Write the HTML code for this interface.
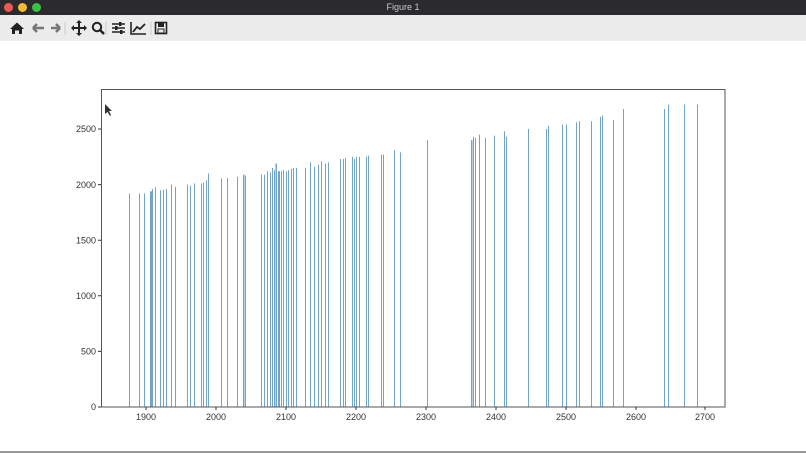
<!DOCTYPE html>
<html><head><meta charset="utf-8"><style>
html,body{margin:0;padding:0;width:806px;height:453px;overflow:hidden;background:#fff;font-family:"Liberation Sans",sans-serif}
#tb{position:absolute;left:0;top:0;width:806px;height:15px;background:#2b2b2f;color:#c8c8c8;font-size:9px;text-align:center;line-height:15px}
.d{position:absolute;top:3px;width:9px;height:9px;border-radius:50%}
#tool{position:absolute;left:0;top:15px;width:806px;height:26px;background:#ececec}
</style></head><body>
<div id="tb">Figure 1
<div class="d" style="left:4px;background:#ee5a52"></div>
<div class="d" style="left:18px;background:#f5bd2f"></div>
<div class="d" style="left:32px;background:#37c443"></div>
</div>
<div id="tool">
<svg width="180" height="26" viewBox="0 0 180 26">
<g fill="#222">
<path d="M10 14 L17 7.5 L24 14 L22 14 L22 19 L19 19 L19 15.5 L15 15.5 L15 19 L12 19 L12 14 Z"/>
<path d="M38 13 L33 13 M33 13 L37 9 M33 13 L37 17" stroke="#777" stroke-width="2.6" fill="none"/>
<path d="M38 13 L44 13" stroke="#777" stroke-width="2.6"/>
<path d="M51 13 L60 13 M60 13 L56 9 M60 13 L56 17" stroke="#777" stroke-width="2.6" fill="none"/>
<path d="M79 7 L79 19 M73 13 L85 13" stroke="#222" stroke-width="2"/>
<path d="M79 5 L76 8 L82 8Z M79 21 L76 18 L82 18Z M71 13 L74 10 L74 16Z M87 13 L84 10 L84 16Z"/>
<circle cx="97" cy="12" r="4.2" fill="none" stroke="#222" stroke-width="2"/>
<path d="M100 15 L104 19" stroke="#222" stroke-width="2.6"/>
<path d="M112 9 H125 M112 13 H125 M112 17 H125" stroke="#222" stroke-width="1.5"/>
<rect x="119" y="7" width="2.5" height="4"/><rect x="115" y="11" width="2.5" height="4"/><rect x="120" y="15" width="2.5" height="4"/>
<path d="M131 7 V19 H146" stroke="#222" stroke-width="1.6" fill="none"/>
<path d="M133 17 L137 12 L140 14 L145 9" stroke="#222" stroke-width="1.8" fill="none"/>
<rect x="155.5" y="7.5" width="11" height="11" fill="none" stroke="#222" stroke-width="1.6"/>
<rect x="158" y="8" width="6" height="4"/><rect x="158" y="14" width="6" height="4" fill="none" stroke="#222"/>
</g>
<path d="M65 7 V20 M106 7 V20 M151 7 V20" stroke="#ccc"/>
</svg>
</div>
<svg style="position:absolute;left:0;top:0" width="806" height="453">
<g fill="#4f8dbd" opacity="0.8" transform="translate(0,407) scale(1,-0.1112)">
<rect x="129" y="0" width="1" height="1920"/><rect x="139" y="0" width="1" height="1920"/><rect x="144" y="0" width="1" height="1920"/>
<rect x="150" y="0" width="2.5" height="1940"/><rect x="152" y="0" width="1" height="1960"/><rect x="155" y="0" width="1" height="1975"/>
<rect x="160" y="0" width="1" height="1950"/><rect x="163" y="0" width="1" height="1955"/><rect x="166" y="0" width="1" height="1960"/>
<rect x="171" y="0" width="1" height="2000"/><rect x="175" y="0" width="1" height="1980"/><rect x="187" y="0" width="1" height="2000"/>
<rect x="190" y="0" width="1" height="1990"/><rect x="194" y="0" width="1" height="2010"/><rect x="201" y="0" width="1" height="2010"/>
<rect x="203" y="0" width="1" height="2020"/><rect x="206" y="0" width="1" height="2040"/><rect x="208" y="0" width="1" height="2100"/>
<rect x="221" y="0" width="1" height="2055"/><rect x="227" y="0" width="1" height="2060"/><rect x="237" y="0" width="1" height="2070"/>
<rect x="243" y="0" width="1.5" height="2090"/><rect x="245" y="0" width="1" height="2080"/><rect x="261" y="0" width="1" height="2090"/>
<rect x="264" y="0" width="1" height="2090"/><rect x="267" y="0" width="1" height="2120"/><rect x="270" y="0" width="1" height="2110"/>
<rect x="272" y="0" width="1" height="2150"/><rect x="274" y="0" width="1" height="2130"/><rect x="275.5" y="0" width="1.5" height="2190"/>
<rect x="278" y="0" width="2" height="2120"/><rect x="281" y="0" width="1" height="2120"/><rect x="283" y="0" width="1" height="2130"/>
<rect x="286" y="0" width="1" height="2120"/><rect x="288" y="0" width="1" height="2130"/><rect x="291" y="0" width="1" height="2140"/>
<rect x="293" y="0" width="1" height="2150"/><rect x="296" y="0" width="1" height="2150"/><rect x="305" y="0" width="1" height="2150"/>
<rect x="310" y="0" width="1" height="2200"/><rect x="314" y="0" width="1" height="2160"/><rect x="318" y="0" width="1" height="2180"/>
<rect x="321" y="0" width="1" height="2210"/><rect x="325" y="0" width="1" height="2190"/><rect x="328" y="0" width="1" height="2200"/>
<rect x="340" y="0" width="1" height="2230"/><rect x="343" y="0" width="1" height="2230"/><rect x="345" y="0" width="1" height="2240"/>
<rect x="352" y="0" width="1" height="2250"/><rect x="354" y="0" width="1" height="2230"/><rect x="356" y="0" width="1" height="2250"/>
<rect x="359" y="0" width="1" height="2250"/><rect x="366" y="0" width="1" height="2250"/><rect x="368" y="0" width="1" height="2260"/>
<rect x="381" y="0" width="1" height="2270"/><rect x="383" y="0" width="1" height="2270"/><rect x="394" y="0" width="1" height="2310"/>
<rect x="400" y="0" width="1" height="2290"/><rect x="427" y="0" width="1" height="2400"/>
<rect x="471" y="0" width="1.5" height="2400"/><rect x="473" y="0" width="1" height="2430"/><rect x="475" y="0" width="1" height="2420"/>
<rect x="479" y="0" width="1" height="2450"/><rect x="485" y="0" width="1" height="2420"/><rect x="494" y="0" width="1" height="2440"/>
<rect x="504" y="0" width="1" height="2480"/><rect x="506" y="0" width="1" height="2430"/><rect x="528" y="0" width="1" height="2500"/>
<rect x="546" y="0" width="1" height="2500"/><rect x="548" y="0" width="1" height="2530"/><rect x="562" y="0" width="1" height="2540"/>
<rect x="566" y="0" width="1" height="2540"/><rect x="576" y="0" width="1" height="2560"/><rect x="579" y="0" width="1" height="2570"/>
<rect x="591" y="0" width="1" height="2570"/><rect x="600" y="0" width="1" height="2610"/><rect x="602" y="0" width="1" height="2620"/>
<rect x="613" y="0" width="1" height="2580"/><rect x="623" y="0" width="1" height="2680"/><rect x="664" y="0" width="1" height="2680"/>
<rect x="668" y="0" width="1" height="2720"/><rect x="684" y="0" width="1" height="2720"/><rect x="697" y="0" width="1" height="2720"/>
</g>
<rect x="101.5" y="89.5" width="623.5" height="317.5" fill="none" stroke="#555" stroke-width="1"/>
<g stroke="#333" stroke-width="1">
<path d="M98 407H101 M98 351.4H101 M98 295.8H101 M98 240.2H101 M98 184.6H101 M98 129H101"/>
<path d="M146 407V410 M216 407V410 M286 407V410 M356 407V410 M426 407V410 M496 407V410 M566 407V410 M636 407V410 M705 407V410"/>
</g>
<g font-size="9" fill="#333" font-family="Liberation Sans,sans-serif">
<g text-anchor="end"><text x="96" y="410">0</text><text x="96" y="354.5">500</text><text x="96" y="299">1000</text><text x="96" y="243.5">1500</text><text x="96" y="188">2000</text><text x="96" y="132">2500</text></g>
<g text-anchor="middle"><text x="146" y="420">1900</text><text x="216" y="420">2000</text><text x="286" y="420">2100</text><text x="356" y="420">2200</text><text x="426" y="420">2300</text><text x="496" y="420">2400</text><text x="566" y="420">2500</text><text x="636" y="420">2600</text><text x="705" y="420">2700</text></g>
</g>
<path d="M105 104 L105 114 L107.5 112 L110 116 L111 115 L109 111 L112 111 Z" fill="#333"/>
<rect x="0" y="451" width="806" height="2" fill="#999"/>
</svg>
</body></html>
